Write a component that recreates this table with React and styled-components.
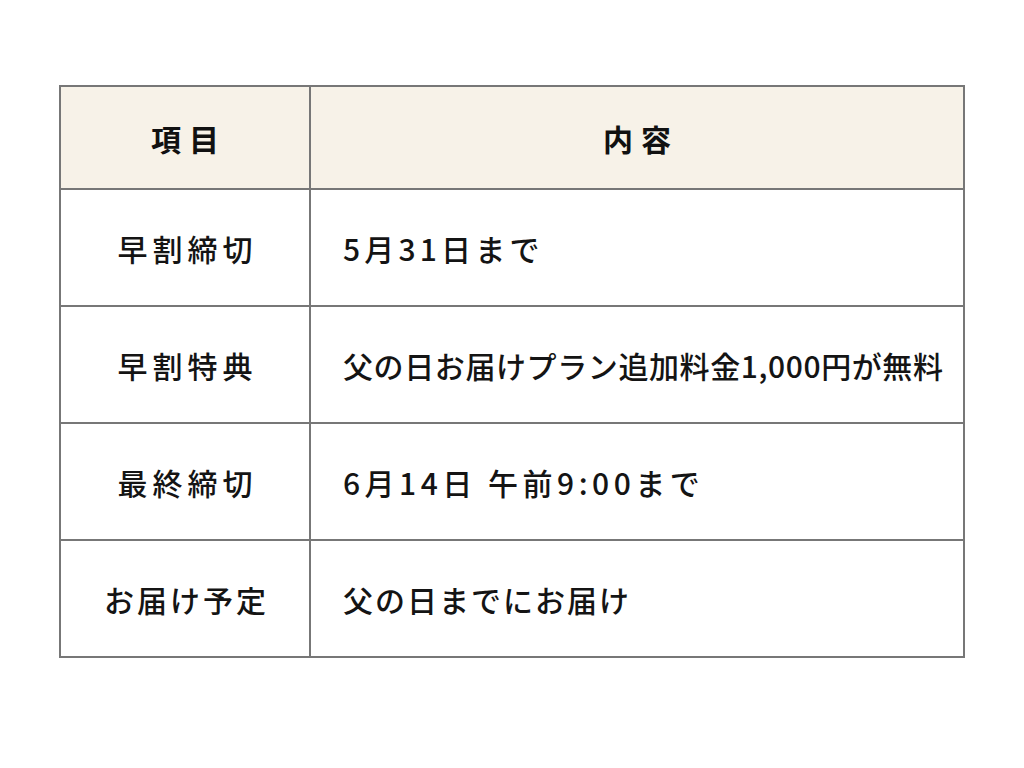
import React from "react";
import styled, { createGlobalStyle } from "styled-components";

const Global = createGlobalStyle`
  html, body { margin: 0; padding: 0; background: #ffffff; }
  body { font-family: "Noto Sans CJK JP", "Noto Sans", sans-serif; color: #1a1a1a; }
`;

const Page = styled.div`
  width: 1024px;
  height: 768px;
  padding: 85px 0 0 59px;
  box-sizing: border-box;
`;

const Table = styled.table`
  width: 906px;
  border-collapse: collapse;
  border: 2px solid #777;
  table-layout: fixed;
`;

const HeadCell = styled.th`
  height: 101px;
  background: #f7f2e8;
  border: 2px solid #777;
  font-size: 30px;
  font-weight: 700;
  letter-spacing: 8px;
  text-align: center;
  color: #111;
  padding: 0 0 0 8px;
  width: ${(p) => p.$w || "auto"};
`;

const Cell = styled.td`
  height: 115px;
  border: 2px solid #777;
  font-size: 30px;
  font-weight: 500;
  letter-spacing: ${(p) => p.$ls || "0px"};
  color: #141414;
  padding: 0 0 0 ${(p) => (p.$center ? p.$ls || "0px" : "32px")};
  text-align: ${(p) => (p.$center ? "center" : "left")};
  white-space: nowrap;
`;

const rows = [
  ["早割締切", "5月31日まで", "4.2px", "5px"],
  ["早割特典", "父の日お届けプラン追加料金1,000円が無料", "0.6px", "5px"],
  ["最終締切", "6月14日 午前9:00まで", "4.5px", "5px"],
  ["お届け予定", "父の日までにお届け", "2px", "3px"],
];

export default function App() {
  return (
    <Page>
      <Global />
      <Table>
        <thead>
          <tr>
            <HeadCell $w="240px">項目</HeadCell>
            <HeadCell>内容</HeadCell>
          </tr>
        </thead>
        <tbody>
          {rows.map(([a, b, ls, ls1]) => (
            <tr key={a}>
              <Cell $center $ls={ls1}>{a}</Cell>
              <Cell $ls={ls}>{b}</Cell>
            </tr>
          ))}
        </tbody>
      </Table>
    </Page>
  );
}
